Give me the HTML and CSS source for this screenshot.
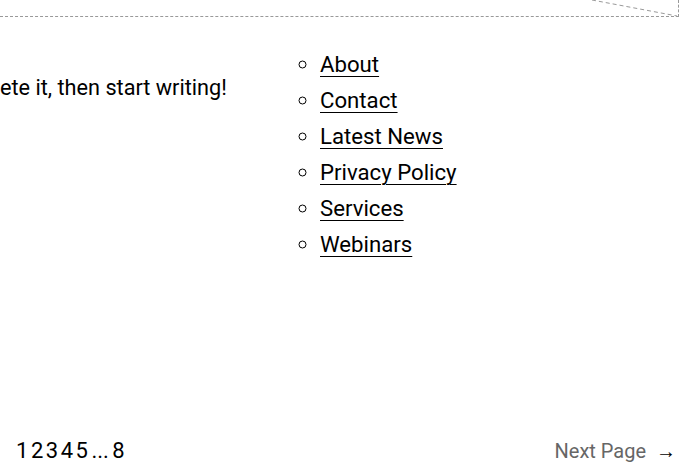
FILE: index.html
```html
<!DOCTYPE html>
<html lang="en">
<head>
  <meta charset="UTF-8">
  <title>Blog</title>
  <link rel="stylesheet" href="styles.css">
</head>
<body>

  <div class="placeholder">
    <svg class="placeholder-line" width="681" height="17" viewBox="0 0 681 17">
      <line x1="592" y1="0" x2="677" y2="16" stroke="#999" stroke-width="1" stroke-dasharray="4 3"/>
    </svg>
  </div>

  <div class="columns">
    <div class="post">
      <p class="excerpt">ete it, then start writing!</p>
    </div>
    <ul class="pages">
      <li><a href="#">About</a></li>
      <li><a href="#">Contact</a></li>
      <li><a href="#">Latest News</a></li>
      <li><a href="#">Privacy Policy</a></li>
      <li><a href="#">Services</a></li>
      <li><a href="#">Webinars</a></li>
    </ul>
  </div>

  <div class="pagination">
    <div class="numbers">
      <span>1</span><span>2</span><span>3</span><span>4</span><span>5</span><span class="dots">...</span><span>8</span>
    </div>
    <a class="next" href="#">Next Page <span class="arrow">→</span></a>
  </div>

</body>
</html>
```

FILE: styles.css
```css
* {
  box-sizing: border-box;
}

body {
  margin: 0;
  width: 681px;
  height: 462px;
  overflow: hidden;
  font-family: Roboto, "Liberation Sans", sans-serif;
  color: #000;
  background: #fff;
  display: flex;
  flex-direction: column;
}

.placeholder {
  position: relative;
  height: 17px;
  margin-right: 2px;
  border-bottom: 1px dashed #999;
  border-right: 1px dashed #999;
}

.placeholder-line {
  position: absolute;
  top: 0;
  left: 0;
}

.columns {
  display: flex;
  margin-top: 29px;
}

.post {
  width: 296px;
}

.excerpt {
  margin: 29px 0 0 0;
  font-size: 21.7px;
  line-height: 26px;
  white-space: nowrap;
}

.pages {
  list-style: circle;
  margin: 0;
  padding-left: 24px;
  font-size: 22.2px;
  line-height: 36px;
}

.pages a {
  color: #000;
  text-decoration: underline;
  text-decoration-thickness: 1px;
  text-underline-offset: 4px;
}

.pagination {
  margin-top: auto;
  display: flex;
  justify-content: space-between;
  align-items: baseline;
  padding: 0 5px 0 16px;
  height: 23px;
  line-height: 23px;
}

.numbers {
  display: flex;
  gap: 2.5px;
  font-size: 22px;
  color: #000;
}

.numbers .dots {
  margin: 0 1px;
}

.next {
  color: #666;
  font-size: 20px;
  text-decoration: none;
}

.next .arrow {
  margin-left: 5px;
  color: #000;
  font-size: 20px;
}
```
